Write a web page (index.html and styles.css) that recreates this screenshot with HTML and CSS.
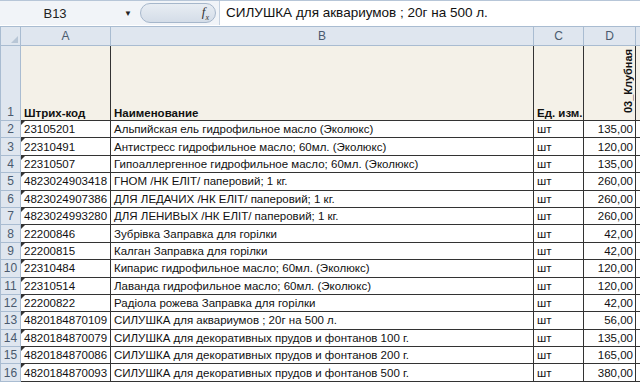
FILE: index.html
```html
<!DOCTYPE html>
<html lang="ru">
<head>
    <meta charset="UTF-8">
    <title>Прайс</title>
    <link rel="stylesheet" href="styles.css">
</head>
<body>
    <div class="formula-bar">
        <div class="name-box">
            <span class="cell-ref">B13</span>
            <span class="arrow">&#9660;</span>
        </div>
        <div class="fx-pill">
            <span class="fx">f<sub>x</sub></span>
        </div>
        <div class="formula-input">СИЛУШКА для аквариумов ; 20г на 500 л.</div>
    </div>

    <table class="sheet">
        <colgroup>
            <col class="c-head">
            <col class="c-a">
            <col class="c-b">
            <col class="c-c">
            <col class="c-d">
            <col class="c-e">
        </colgroup>
        <thead>
            <tr class="col-heads">
                <th class="corner"><span class="corner-mark"></span></th>
                <th>A</th>
                <th>B</th>
                <th>C</th>
                <th>D</th>
                <th class="last"></th>
            </tr>
        </thead>
        <tbody>
            <tr class="title-row">
                <th class="row-num">1</th>
                <td class="bold">Штрих-код</td>
                <td class="bold">Наименование</td>
                <td class="bold">Ед. изм.</td>
                <td class="rot-cell"><span class="rot">03_Клубная</span></td>
                <td class="last"></td>
            </tr>
        </tbody>
        <tbody id="rows"></tbody>
    </table>

    <script>
        // Price list rows: barcode, name, unit, price
        const items = [
            ['23105201', 'Альпийская ель гидрофильное масло  (Эколюкс)', 'шт', '135,00'],
            ['22310491', 'Антистресс гидрофильное масло; 60мл. (Эколюкс)', 'шт', '120,00'],
            ['22310507', 'Гипоаллергенное гидрофильное масло; 60мл. (Эколюкс)', 'шт', '135,00'],
            ['4823024903418', 'ГНОМ  /НК ЕЛІТ/ паперовий; 1 кг.', 'шт', '260,00'],
            ['4823024907386', 'ДЛЯ ЛЕДАЧИХ /НК ЕЛІТ/ паперовий; 1 кг.', 'шт', '260,00'],
            ['4823024993280', 'ДЛЯ ЛЕНИВЫХ /НК ЕЛІТ/ паперовий; 1 кг.', 'шт', '260,00'],
            ['22200846', 'Зубрівка Заправка для горілки', 'шт', '42,00'],
            ['22200815', 'Калган Заправка для горілки', 'шт', '42,00'],
            ['22310484', 'Кипарис гидрофильное масло; 60мл. (Эколюкс)', 'шт', '120,00'],
            ['22310514', 'Лаванда гидрофильное масло; 60мл. (Эколюкс)', 'шт', '120,00'],
            ['22200822', 'Радіола рожева Заправка для горілки', 'шт', '42,00'],
            ['4820184870109', 'СИЛУШКА для аквариумов ; 20г на 500 л.', 'шт', '56,00'],
            ['4820184870079', 'СИЛУШКА для декоративных прудов и фонтанов 100 г.', 'шт', '135,00'],
            ['4820184870086', 'СИЛУШКА для декоративных прудов и фонтанов 200 г.', 'шт', '165,00'],
            ['4820184870093', 'СИЛУШКА для декоративных прудов и фонтанов 500 г.', 'шт', '380,00']
        ];

        let html = '';
        items.forEach(function (item, i) {
            html += `
                <tr class="data-row">
                    <th class="row-num">${i + 2}</th>
                    <td class="code">${item[0]}</td>
                    <td>${item[1]}</td>
                    <td>${item[2]}</td>
                    <td class="num">${item[3]}</td>
                    <td class="last"></td>
                </tr>`;
        });
        document.getElementById('rows').innerHTML = html;
    </script>
</body>
</html>
```

FILE: styles.css
```css
:root {
    --head-bg: #dfe6ef;
    --head-line: #a9bcd1;
    --head-text: #4a5a6e;
    --grid: #333333;
    --title-bg: #f4f1e8;
}

body {
    margin: 0;
    width: 640px;
    height: 382px;
    overflow: hidden;
    background: #ffffff;
    font-family: 'Liberation Sans', Arial, sans-serif;
    color: #111;
}

/* formula bar */
.formula-bar {
    display: flex;
    height: 25px;
    border-top: 1px solid #b7c6d8;
    background: #f1f4f8;
    box-sizing: border-box;
}

.name-box {
    width: 140px;
    display: flex;
    align-items: center;
    font-size: 13px;
    color: #222;
}

.cell-ref {
    flex: 1;
    text-align: center;
    padding-right: 14px;
}

.arrow {
    font-size: 8px;
    color: #222;
    padding-right: 8px;
}

.fx-pill {
    width: 76px;
    margin: 2px 0;
    border: 1px solid #a6b7cb;
    border-radius: 11px;
    background: linear-gradient(#e8edf3, #d4dde8);
    display: flex;
    align-items: center;
    justify-content: flex-end;
    box-sizing: border-box;
}

.fx {
    font-family: 'Liberation Serif', serif;
    font-style: italic;
    font-size: 13px;
    color: #333;
    padding-right: 6px;
}

.fx sub {
    font-size: 8px;
}

.formula-input {
    flex: 1;
    margin-left: 3px;
    background: #ffffff;
    border-left: 1px solid #c6d2e0;
    font-size: 13.5px;
    line-height: 24px;
    padding-left: 6px;
    color: #111;
    white-space: nowrap;
}

/* sheet grid */
.sheet {
    border-collapse: collapse;
    table-layout: fixed;
    width: 640px;
    margin-top: 1px;
    font-size: 11.5px;
}

.c-head { width: 20px; }
.c-a { width: 90px; }
.c-b { width: 423px; }
.c-c { width: 50px; }
.c-d { width: 52px; }
.c-e { width: 5px; }

.col-heads th {
    height: 18px;
    background: var(--head-bg);
    border: 1px solid var(--head-line);
    color: var(--head-text);
    font-weight: normal;
    font-size: 12px;
    padding: 0;
}

.col-heads th.last {
    border-right: none;
}

.corner {
    position: relative;
}

.corner-mark {
    position: absolute;
    right: 2px;
    bottom: 2px;
    border-left: 7px solid transparent;
    border-bottom: 7px solid #b8c6d6;
}

.row-num {
    background: var(--head-bg);
    border: 1px solid var(--head-line);
    color: var(--head-text);
    font-weight: normal;
    font-size: 12px;
    text-align: center;
    padding: 0;
}

td {
    border: 1px solid var(--grid);
    padding: 0 3px;
    white-space: nowrap;
    overflow: hidden;
}

td.last {
    border-right: none;
    padding: 0;
}

.title-row th,
.title-row td {
    height: 73px;
    vertical-align: bottom;
    padding-bottom: 1px;
}

.title-row td {
    background: var(--title-bg);
}

.bold {
    font-weight: bold;
}

.rot-cell {
    position: relative;
}

.rot {
    position: absolute;
    right: 1px;
    bottom: 7px;
    writing-mode: vertical-rl;
    transform: rotate(180deg);
    font-weight: bold;
    font-size: 11px;
    white-space: nowrap;
}

.data-row th,
.data-row td {
    height: 16.4px;
    line-height: 14px;
}

.code {
    position: relative;
}

.code::before {
    content: '';
    position: absolute;
    left: 0;
    top: 0;
    border-top: 4px solid #333;
    border-right: 4px solid transparent;
}

.num {
    text-align: right;
    padding-right: 2px;
}
```
